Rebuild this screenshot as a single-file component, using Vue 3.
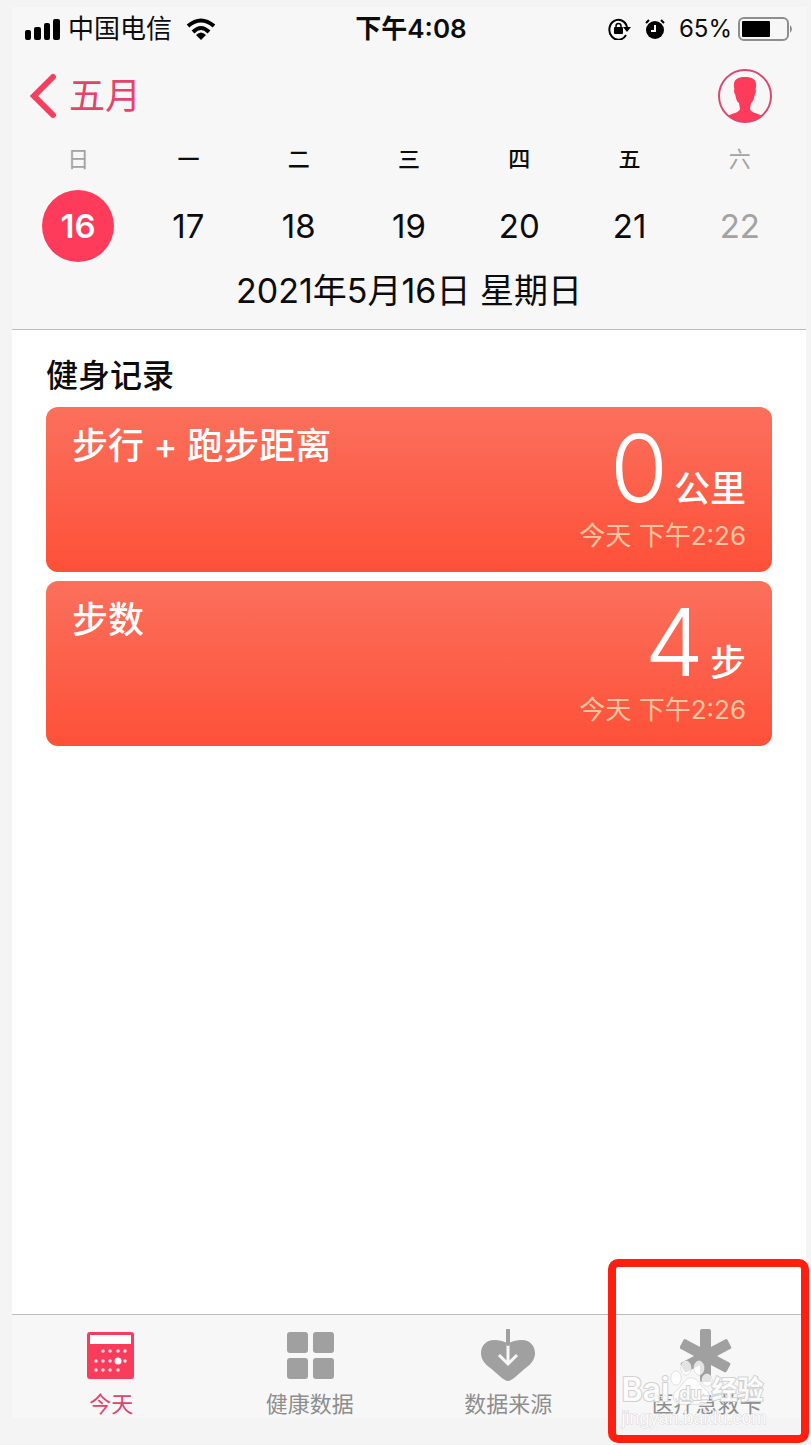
<script setup>
const days = [
  { name: '日', date: 16, weekend: true, selected: true },
  { name: '一', date: 17 },
  { name: '二', date: 18 },
  { name: '三', date: 19 },
  { name: '四', date: 20 },
  { name: '五', date: 21 },
  { name: '六', date: 22, weekend: true },
]

const records = [
  { title: '步行 + 跑步距离', value: '0', unit: '公里', time: '今天 下午2:26' },
  { title: '步数', value: '4', unit: '步', time: '今天 下午2:26' },
]

// Dots of the small calendar icon, row by row
const dots = [
  [16, 19], [23, 19], [31, 19], [38, 19],
  [9, 29], [16, 29], [23, 29], [38, 29],
  [9, 38], [16, 38], [23, 38], [31, 38],
]
</script>

<template>
  <div class="page">
    <main class="phone">
      <header class="top">
        <div class="status">
          <div class="status-side">
            <svg class="signal" width="36" height="22" viewBox="0 0 36 22" aria-hidden="true">
              <rect x="1" y="12" width="6" height="10" rx="2" />
              <rect x="10" y="9" width="7" height="13" rx="2" />
              <rect x="20" y="5" width="6" height="17" rx="2" />
              <rect x="29" y="1" width="7" height="21" rx="2" />
            </svg>
            <span class="carrier">中国电信</span>
            <svg class="wifi" width="30" height="22" viewBox="0 0 30 22" aria-hidden="true">
              <g fill="none" stroke="#000" stroke-width="4">
                <path d="M2 8 Q15 -3 28 8" />
                <path d="M7 14 Q15 6 23 14" />
              </g>
              <path d="M10 17 Q15 12 20 17 L15 22 Z" />
            </svg>
          </div>
          <span class="clock">下午4:08</span>
          <div class="status-side right">
            <svg class="lock" width="24" height="22" viewBox="0 0 24 22" aria-hidden="true">
              <path d="M19 17 A9 10 0 1 1 20 9" fill="none" stroke="#000" stroke-width="2" />
              <path d="M16 9 H24 L20 14 Z" />
              <rect x="7" y="9" width="9" height="7" rx="1" />
              <path d="M9 10 V8 a2.500 2.500 0 0 1 5 0 V10" fill="none" stroke="#000" stroke-width="1.500" />
            </svg>
            <svg class="alarm" width="20" height="20" viewBox="0 0 20 20" aria-hidden="true">
              <circle cx="10" cy="11" r="9" />
              <path d="M1 4 L4 1 M19 4 L16 1" stroke="#000" stroke-width="2" />
              <path d="M10 6 V12 H6" fill="none" stroke="#f7f7f7" stroke-width="2" />
            </svg>
            <span class="percent">65%</span>
            <svg class="battery" width="56" height="24" viewBox="0 0 56 24" aria-hidden="true">
              <rect x="1" y="1" width="49" height="22" rx="5" fill="none" stroke="#8e8e8e" stroke-width="2" />
              <rect x="4" y="4" width="28" height="16" rx="1" />
              <path d="M52 8 Q56 12 52 16 Z" fill="#8e8e8e" />
            </svg>
          </div>
        </div>

        <nav class="nav">
          <button type="button" class="back">
            <svg width="28" height="46" viewBox="0 0 28 46" aria-hidden="true">
              <path d="M24 4 L5 23 L24 42" fill="none" stroke="#f43f5f" stroke-width="6" stroke-linecap="round" />
            </svg>
            <span>五月</span>
          </button>
          <button type="button" class="avatar" aria-label="个人资料">
            <svg width="54" height="54" viewBox="0 0 54 54" aria-hidden="true">
              <path
                d="M10 47 C14 44 21 44 22 40 L21 34 C18 32 18 28 17 25 C15 22 17 21 16 18 C15 11 19 8 27 8 C35 8 39 11 38 18 C37 21 39 22 37 25 C36 28 36 32 33 34 L32 40 C33 44 40 44 44 47 C34 55 20 55 10 47 Z"
                fill="#ff3b5c"
              />
              <circle cx="27" cy="27" r="26" fill="none" stroke="#d9486f" stroke-width="2" />
            </svg>
          </button>
        </nav>

        <div class="week">
          <div v-for="d in days" :key="d.date" class="day" :class="{ weekend: d.weekend, selected: d.selected }">
            <span class="day-name">{{ d.name }}</span>
            <button type="button" class="day-date">{{ d.date }}</button>
          </div>
        </div>
        <p class="full-date">2021年5月16日 星期日</p>
      </header>

      <section class="content">
        <h1>健身记录</h1>
        <article v-for="r in records" :key="r.title" class="card">
          <h2>{{ r.title }}</h2>
          <div class="reading">
            <p class="amount"><span class="value">{{ r.value }}</span><span class="unit">{{ r.unit }}</span></p>
            <p class="time">{{ r.time }}</p>
          </div>
        </article>
      </section>

      <nav class="tabs">
        <button type="button" class="tab active">
          <svg width="48" height="54" viewBox="0 0 48 54" aria-hidden="true">
            <g transform="translate(0 3)">
              <rect width="47" height="47" rx="3" fill="#f93c5c" />
              <rect x="3" y="3" width="41" height="9" fill="#fff" />
              <circle v-for="(p, i) in dots" :key="i" :cx="p[0]" :cy="p[1]" r="1.700" fill="#ffe3e8" />
              <circle cx="31" cy="29" r="3.500" fill="#fff" />
            </g>
          </svg>
          <span>今天</span>
        </button>
        <button type="button" class="tab">
          <svg width="48" height="54" viewBox="0 0 48 54" fill="#a0a0a0" aria-hidden="true">
            <rect x="1" y="3" width="21" height="21" rx="3" />
            <rect x="27" y="3" width="21" height="21" rx="3" />
            <rect x="1" y="29" width="21" height="21" rx="3" />
            <rect x="27" y="29" width="21" height="21" rx="3" />
          </svg>
          <span>健康数据</span>
        </button>
        <button type="button" class="tab">
          <svg width="54" height="54" viewBox="0 0 54 54" aria-hidden="true">
            <path
              d="M27 52 C23 52 17 45 8 38 C2 33 0 29 0 24 C0 17 5 11 13 11 C19 11 23 12 27 15 C31 12 35 11 41 11 C49 11 54 17 54 24 C54 29 52 33 46 38 C37 45 31 52 27 52 Z"
              fill="#a0a0a0"
            />
            <path d="M27 15 V35 M18 26 L27 35 L36 26" fill="none" stroke="#f7f7f7" stroke-width="3" />
            <path d="M27 1 V15" stroke="#a0a0a0" stroke-width="4" stroke-linecap="round" />
          </svg>
          <span>数据来源</span>
        </button>
        <div class="tab-slot">
          <button type="button" class="tab">
            <svg width="54" height="54" viewBox="0 0 54 54" aria-hidden="true">
              <g fill="#a0a0a0">
                <rect x="20" y="0" width="11" height="53" rx="2" />
                <rect x="20" y="0" width="11" height="53" rx="2" transform="rotate(62 25.500 27)" />
                <rect x="20" y="0" width="11" height="53" rx="2" transform="rotate(-62 25.500 27)" />
              </g>
            </svg>
            <span>医疗急救卡</span>
          </button>
          <div class="mark">
            <div class="mark-brand">
              <span class="latin">Bai</span>
              <span class="paw">
                <svg width="46" height="46" viewBox="0 0 46 46" aria-hidden="true">
                  <g fill="#fff" fill-opacity="0.700" stroke="#d2d2d2">
                    <ellipse cx="6" cy="18" rx="5" ry="7" />
                    <ellipse cx="16" cy="8" rx="5" ry="7" />
                    <ellipse cx="29" cy="8" rx="5" ry="7" />
                    <ellipse cx="37" cy="20" rx="5" ry="6" />
                    <path d="M21 18 C28 18 30 26 36 30 C42 35 39 44 32 44 H11 C3 44 1 35 7 30 C13 26 14 18 21 18 Z" />
                  </g>
                </svg>
                <span class="du">du</span>
              </span>
              <span>经验</span>
            </div>
            <div class="mark-site">jingyan.baidu.com</div>
          </div>
          <div class="highlight"></div>
        </div>
      </nav>
    </main>
  </div>
</template>

<style>
body {
  margin: 0;
  background: #f4f4f4;
}
</style>

<style scoped>
.page {
  box-sizing: border-box;
  display: flex;
  min-height: 100vh;
  padding: 7px 5px 27px 12px;
  background: #f4f4f4;
  color: #0c0c0c;
  font-family: Inter, "Noto Sans CJK SC", sans-serif;
  overflow: hidden;
}

.phone {
  display: flex;
  flex: 1;
  flex-direction: column;
  min-width: 0;
  background: #fff;
}

button {
  padding: 0;
  border: 0;
  background: none;
  color: inherit;
  font: inherit;
  cursor: pointer;
}

h1,
h2,
p {
  margin: 0;
}

svg {
  display: block;
  flex: none;
}

.top {
  padding-bottom: 16px;
  border-bottom: 1px solid #bdbdbd;
  background: #f7f7f7;
}

.status {
  display: grid;
  grid-template-columns: 1fr auto 1fr;
  align-items: center;
  height: 44px;
  padding: 0 12px;
  font-size: 26px;
  line-height: 28px;
}

.status-side {
  display: flex;
  align-items: center;
}

.status-side.right {
  justify-content: flex-end;
}

.carrier {
  margin: 0 14px 0 8px;
}

.clock {
  padding-left: 4px;
  font-weight: 600;
}

.alarm {
  margin: 0 14px;
}

.percent {
  margin-right: 6px;
  font-size: 24px;
}

.nav {
  display: flex;
  align-items: center;
  justify-content: space-between;
  height: 90px;
  padding: 0 34px 0 17px;
}

.back {
  display: flex;
  align-items: center;
  gap: 12px;
  color: #e5446a;
  font-size: 36px;
  line-height: 36px;
}

.week {
  display: grid;
  grid-template-columns: repeat(7, 1fr);
  padding: 4px 11px 0;
}

.day {
  display: flex;
  flex-direction: column;
  align-items: center;
  gap: 17px;
}

.day-name {
  font-size: 22px;
  font-weight: 500;
  line-height: 28px;
}

.day-date {
  width: 72px;
  height: 72px;
  border-radius: 50%;
  font-size: 33px;
}

.weekend {
  color: #a3a3a3;
}

.weekend .day-name {
  font-weight: 400;
}

.selected .day-date {
  background: #ff3b5c;
  color: #fff;
  font-weight: 600;
}

.full-date {
  padding-top: 7px;
  font-size: 34px;
  line-height: 44px;
  text-align: center;
}

.content {
  flex: 1;
  padding: 22px 34px;
}

h1 {
  margin-bottom: 7px;
  font-size: 32px;
  font-weight: 500;
  line-height: 48px;
}

.card {
  display: flex;
  justify-content: space-between;
  box-sizing: border-box;
  min-height: 165px;
  margin-bottom: 9px;
  padding: 15px 26px 18px;
  border-radius: 12px;
  background: linear-gradient(#fb705c, #fe5039);
  color: #fff;
}

h2 {
  font-size: 36px;
  font-weight: 500;
  line-height: 48px;
}

.reading {
  text-align: right;
}

.amount {
  display: flex;
  align-items: baseline;
  justify-content: flex-end;
  gap: 6px;
  height: 96px;
  line-height: 92px;
}

.value {
  font-size: 94px;
  font-weight: 300;
}

.unit {
  font-size: 36px;
  font-weight: 500;
}

.time {
  color: #ffc5a0;
  font-size: 26px;
  line-height: 36px;
}

.tabs {
  display: grid;
  grid-template-columns: repeat(4, 1fr);
  height: 103px;
  border-top: 1px solid #bdbdbd;
  background: #f7f7f7;
}

.tab {
  display: flex;
  flex-direction: column;
  align-items: center;
  gap: 7px;
  width: 100%;
  height: 100%;
  padding-top: 14px;
  color: #8e8e8e;
  font-size: 22px;
  line-height: 28px;
}

.tab.active {
  color: #e0436c;
}

.tab-slot {
  position: relative;
}

.highlight {
  position: absolute;
  inset: -56px -3px -25px 0;
  border: 8px solid #ff1f10;
  border-radius: 10px;
  pointer-events: none;
}

.mark {
  position: absolute;
  top: 45px;
  left: 14px;
  color: rgba(255, 255, 255, 0.9);
  pointer-events: none;
}

.mark-brand {
  display: flex;
  align-items: flex-end;
  margin-bottom: 2px;
  font-size: 26px;
  font-weight: 600;
  line-height: 32px;
  -webkit-text-stroke: 2px #d2d2d2;
  paint-order: stroke fill;
}

.latin {
  width: 48px;
  font-size: 32px;
}

.paw {
  position: relative;
  width: 42px;
}

.du {
  position: absolute;
  right: 0;
  bottom: 2px;
  left: 0;
  font-size: 18px;
  line-height: 20px;
  text-align: center;
}

.mark-site {
  font-family: "Liberation Sans", sans-serif;
  font-size: 18px;
  line-height: 20px;
  -webkit-text-stroke: 1px #d8d8d8;
  paint-order: stroke fill;
}
</style>
